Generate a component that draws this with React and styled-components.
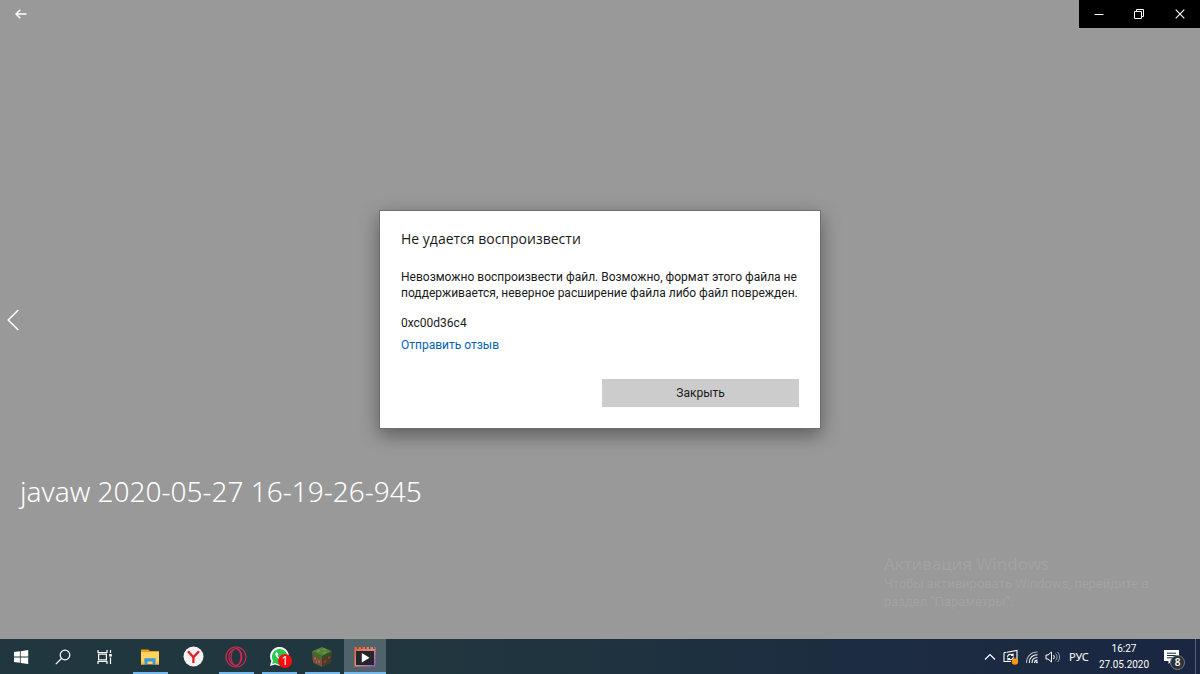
import React from "react";
import styled, { createGlobalStyle } from "styled-components";

const GlobalStyle = createGlobalStyle`
  *, *::before, *::after { box-sizing: border-box; }
  body { margin: 0; background: #999999; }
  button { border: 0; padding: 0; background: none; color: inherit; font: inherit; cursor: pointer; }
  h1, h2, p { margin: 0; font-weight: 400; }
  svg { display: block; }
`;

const Desktop = styled.div`
  display: flex;
  flex-direction: column;
  min-height: 100vh;
  font-family: "Noto Sans", "Open Sans", sans-serif;
  font-size: 12px;
`;

const Player = styled.main`
  position: relative;
  flex: 1;
  display: flex;
  flex-direction: column;
  justify-content: space-between;
  background: #999999;
  color: #ffffff;
`;

const TitleBar = styled.header`
  display: flex;
  justify-content: space-between;
  height: 28px;
`;

const BackButton = styled.button`
  display: grid;
  place-items: center;
  width: 42px;
  height: 28px;
`;

const WindowControls = styled.div`
  display: flex;
  background: #000000;
`;

const ControlButton = styled.button`
  display: grid;
  place-items: center;
  width: 40px;
  &:last-child { width: 41px; }
`;

const PreviousButton = styled.button`
  position: absolute;
  left: 0;
  top: 50%;
  transform: translateY(-50%);
  display: grid;
  place-items: center;
  width: 26px;
  height: 48px;
`;

const PlayerFooter = styled.footer`
  display: flex;
  flex-direction: column;
  gap: 42px;
  padding: 0 36px 28px 20px;
`;

const MediaTitle = styled.h1`
  font-size: 28px;
  font-weight: 300;
  line-height: 40px;
`;

const Activation = styled.aside`
  align-self: flex-end;
  width: 280px;
  color: #a2a2a2;
`;

const ActivationTitle = styled.h2`
  font-size: 17px;
  line-height: 22px;
`;

const ActivationText = styled.p`
  font-family: "Roboto", sans-serif;
  font-size: 13px;
  line-height: 18px;
`;

const DialogLayer = styled.div`
  position: absolute;
  inset: 0;
  display: grid;
  place-items: center;
  pointer-events: none;
`;

const Dialog = styled.section`
  pointer-events: auto;
  width: 442px;
  padding: 18px 21px 21px;
  border: 1px solid #6f6f6f;
  background: #ffffff;
  color: #1a1a1a;
  font-family: "Roboto", sans-serif;
  box-shadow: 0 6px 18px rgba(0, 0, 0, 0.4);
`;

const DialogTitle = styled.h2`
  font-family: "Open Sans", sans-serif;
  font-size: 14px;
  line-height: 20px;
`;

const DialogText = styled.p`
  margin-top: 20px;
  line-height: 16px;
`;

const ErrorCode = styled.p`
  margin-top: 14px;
  line-height: 16px;
`;

const FeedbackLink = styled.a`
  display: block;
  width: fit-content;
  margin-top: 6px;
  color: #0063b1;
  line-height: 16px;
  text-decoration: none;
`;

const DialogActions = styled.div`
  display: flex;
  justify-content: flex-end;
  margin-top: 26px;
`;

const CloseButton = styled.button`
  width: 197px;
  height: 28px;
  background: #cccccc;
`;

const Taskbar = styled.nav`
  display: flex;
  justify-content: space-between;
  height: 35px;
  background: linear-gradient(90deg, #21373f 0%, #21373f 34%, #1d2f40 62%, #1a2642 100%);
  color: #ffffff;
`;

const TaskGroup = styled.div`
  display: flex;
  gap: 1px;
`;

const SystemButton = styled.button`
  display: grid;
  place-items: center;
  width: 41px;
`;

const AppButton = styled.button`
  position: relative;
  display: grid;
  place-items: center;
  width: 42px;
  background: ${(p) => (p.$active ? "#50626a" : "none")};
  &::after {
    content: "";
    display: ${(p) => (p.$running ? "block" : "none")};
    position: absolute;
    bottom: 0;
    left: ${(p) => (p.$active ? "0" : "4px")};
    right: ${(p) => (p.$active ? "0" : "3px")};
    height: 2px;
    background: #76b9ed;
  }
`;

const AppList = styled(TaskGroup)`
  padding-left: 3px;
`;

const Tray = styled.div`
  display: flex;
  align-items: center;
`;

const TrayButton = styled.button`
  display: grid;
  place-items: center;
  width: ${(p) => p.$width || 21}px;
  height: 35px;
`;

const Language = styled(TrayButton)`
  font-size: 11px;
`;

const Clock = styled.button`
  width: 58px;
  font-family: "Roboto", sans-serif;
  font-size: 10px;
  line-height: 16px;
  text-align: center;
`;

const Time = styled.time`
  display: block;
`;

const Notifications = styled(TrayButton)`
  position: relative;
  padding-right: 4px;
`;

const Count = styled.span`
  position: absolute;
  right: 10px;
  bottom: 4px;
  width: 15px;
  height: 15px;
  border: 1px solid #747b87;
  border-radius: 50%;
  background: #2d3137;
  font-size: 10px;
  font-weight: 600;
  line-height: 13px;
  text-align: center;
`;

const UnreadBadge = styled.span`
  position: absolute;
  left: 20px;
  top: 15px;
  width: 14px;
  height: 14px;
  border-radius: 50%;
  background: #f80d0d;
  font-size: 12px;
  line-height: 14px;
  text-align: center;
`;

const ShowDesktop = styled.button`
  width: 5px;
  height: 35px;
  border-left: 1px solid #55607a;
`;

const Line = ({ width, height, stroke = 1, children, color = "#fff" }) => (
  <svg width={width} height={height} viewBox={`0 0 ${width} ${height}`} fill="none" stroke={color} strokeWidth={stroke} aria-hidden="true">
    {children}
  </svg>
);

const StartIcon = () => (
  <svg width="16" height="16" viewBox="0 0 16 16" fill="#fff" aria-hidden="true">
    <path d="M1 3.1 6.9 2.3V7.6H1zM7.7 2.2 15.2 1v6.6H7.7zM1 8.4h5.9v5.3L1 12.9zM7.7 8.4h7.5V15L7.7 13.9z" />
  </svg>
);

const ExplorerIcon = () => (
  <svg width="20" height="18" viewBox="0 0 20 18" aria-hidden="true">
    <path d="M1 1.5h7.5l1.2 1.6H19V8H1z" fill="#e9a01b" />
    <path d="M1 4h18v12.4H1z" fill="#ffd35c" />
    <path d="M4.4 16.6V10.2h11.2v6.4h-3v-3.2H7.4v3.2z" fill="#3a97dd" />
    <path d="M1 14.2h3.4v2.2H1zM15.6 14.2H19v2.2h-3.4z" fill="#f5bd43" />
  </svg>
);

const YandexIcon = () => (
  <svg width="21" height="21" viewBox="0 0 21 21" aria-hidden="true">
    <circle cx="10.5" cy="10.5" r="10" fill="#f3f3f3" />
    <path d="M5 5.3 10.4 11.2 16 5.3M10.4 10.5V17" fill="none" stroke="#e21c22" strokeWidth="2.3" />
  </svg>
);

const OperaIcon = () => (
  <Line width={22} height={22} stroke={1.2} color="#d02850">
    <circle cx="11" cy="11" r="10" />
    <ellipse cx="11" cy="11" rx="5" ry="8.6" />
    <path d="M11 2.4c7.8 1.3 7.8 15.9 0 17.2M8.5 3.2c-6 2.7-6 12.9 0 15.6" />
  </Line>
);

const WhatsAppIcon = () => (
  <svg width="21" height="21" viewBox="0 0 21 21" aria-hidden="true">
    <path d="M1 20 2.3 15A9.4 9.4 0 1 1 6 18.6z" fill="#fff" />
    <path d="M3.1 18 4 14.7a7.8 7.8 0 1 1 2.2 2.4z" fill="#28c94c" />
    <path d="M7.6 5.6 6.3 7c-.6 3 4.2 7.7 7.2 7.5l1.6-1.6-2.4-1.5-1.2 1.1c-1.3-.5-2.5-1.7-3-3L9.4 8.3z" fill="#fff" />
  </svg>
);

const MinecraftIcon = () => (
  <svg width="22" height="22" viewBox="0 0 22 22" aria-hidden="true">
    <path d="m1 5.3 10-4.3 10 4.3-10 4.9z" fill="#55803c" />
    <path d="m1 5.3 10 4.9V21L2 16.5z" fill="#79503a" />
    <path d="m21 5.3-10 4.9V21l9-4.5z" fill="#543626" />
    <path d="m1 5.3 10 4.9v2l-2-.6-1 .6-2-1.6-2 0L1.2 7z" fill="#3f6d2b" />
    <path d="m21 5.3-10 4.9v2l2-1 2 .2 2-2 1 .3 2.8-1.7z" fill="#2c5322" />
    <path d="m5 5 3-1.5L10 4.5 7 6zM11 3l3-.5 2 1.5-3 .6zM11 7l3-1.5 2 .7L13 8z" fill="#6d9848" />
    <path d="m3 11 2 1v2l-2-1zM7 14l2 1v2l-2-1zM5 15l1 .5v2L5 17z" fill="#9a6f4e" />
    <path d="m13 15 2-1v2l-2 1zM17 11l2-1v2l-2 1z" fill="#765039" />
  </svg>
);

const MoviesIcon = () => (
  <svg width="22" height="20" viewBox="0 0 22 20" aria-hidden="true">
    <defs>
      <linearGradient id="film" x1="0" y1="0" x2="1" y2="1">
        <stop offset="0" stopColor="#ee6038" />
        <stop offset=".5" stopColor="#e08a78" />
        <stop offset="1" stopColor="#9250d2" />
      </linearGradient>
    </defs>
    <path d="M.5 0h21v19.5H.5z" fill="url(#film)" />
    <path d="M2 4h18v14H2z" fill="#25252c" />
    <path d="M3 0h1.5v2H3zM7 0h1.500v2H7zM11 0h1.500v2H11zM15 0h1.500v2H15zM19 0h1.500v2H19z" fill="#50505c" />
    <path d="M7.8 6v9.5l7.7-4.8z" fill="#fff" />
  </svg>
);

const apps = [
  { name: "Проводник", icon: <ExplorerIcon />, running: true },
  { name: "Яндекс", icon: <YandexIcon /> },
  { name: "Opera", icon: <OperaIcon />, running: true },
  { name: "WhatsApp", icon: <WhatsAppIcon />, running: true, unread: 1 },
  { name: "Minecraft", icon: <MinecraftIcon />, running: true },
  { name: "Кино и ТВ", icon: <MoviesIcon />, running: true, active: true },
];

export default function App() {
  return (
    <Desktop>
      <GlobalStyle />
      <Player>
        <TitleBar>
          <BackButton aria-label="Назад">
            <Line width={12} height={10} stroke={1.4}><path d="M11.5 5H1M5.3.7 1 5l4.3 4.3" /></Line>
          </BackButton>
          <WindowControls>
            <ControlButton aria-label="Свернуть"><Line width={10} height={10}><path d="M.5 5.5h9" /></Line></ControlButton>
            <ControlButton aria-label="Свернуть в окно">
              <Line width={10} height={10}><path d="M.5 2.5h7v7h-7zM2.5 2.5v-2h7v7h-2" /></Line>
            </ControlButton>
            <ControlButton aria-label="Закрыть окно"><Line width={10} height={10} stroke={1.1}><path d="m.7.7 8.6 8.6m0-8.6L.7 9.3" /></Line></ControlButton>
          </WindowControls>
        </TitleBar>

        <PreviousButton aria-label="Предыдущий">
          <Line width={12} height={22} stroke={1.5}><path d="M11.3 1 1.2 11l10.1 10" /></Line>
        </PreviousButton>

        <PlayerFooter>
          <MediaTitle>javaw 2020-05-27 16-19-26-945</MediaTitle>
          <Activation>
            <ActivationTitle>Активация Windows</ActivationTitle>
            <ActivationText>Чтобы активировать Windows, перейдите в раздел "Параметры".</ActivationText>
          </Activation>
        </PlayerFooter>

        <DialogLayer>
          <Dialog role="dialog" aria-labelledby="dialog-title">
            <DialogTitle id="dialog-title">Не удается воспроизвести</DialogTitle>
            <DialogText>
              Невозможно воспроизвести файл. Возможно, формат этого файла не<br />
              поддерживается, неверное расширение файла либо файл поврежден.
            </DialogText>
            <ErrorCode>0xc00d36c4</ErrorCode>
            <FeedbackLink href="#feedback">Отправить отзыв</FeedbackLink>
            <DialogActions><CloseButton>Закрыть</CloseButton></DialogActions>
          </Dialog>
        </DialogLayer>
      </Player>

      <Taskbar aria-label="Панель задач">
        <TaskGroup>
          <SystemButton aria-label="Пуск"><StartIcon /></SystemButton>
          <SystemButton aria-label="Поиск">
            <Line width={16} height={16} stroke={1.2}><circle cx="10" cy="6" r="4.8" /><path d="m6.5 9.5-5.7 5.7" /></Line>
          </SystemButton>
          <SystemButton aria-label="Представление задач">
            <Line width={16} height={16} stroke={1.2}>
              <path d="M1 1v2.5h9V1M1 15v-2.5h9V15M1.6 5.2h7.8v5.6H1.6zM13.5 1v3M13.5 8.5V15" />
              <path d="M12.2 5h2.6v2.6h-2.6z" fill="#fff" stroke="none" />
            </Line>
          </SystemButton>
          <AppList>
            {apps.map((app) => (
              <AppButton key={app.name} aria-label={app.name} $running={app.running} $active={app.active}>
                {app.icon}
                {app.unread && <UnreadBadge>{app.unread}</UnreadBadge>}
              </AppButton>
            ))}
          </AppList>
        </TaskGroup>

        <Tray>
          <TrayButton aria-label="Скрытые значки"><Line width={12} height={8} stroke={1.2}><path d="m1 6.5 5-5 5 5" /></Line></TrayButton>
          <TrayButton aria-label="Обновление">
            <Line width={16} height={16} stroke={1.1}>
              <path d="M4 3.2 14 1.5v12M1 3.5h2.5M1 3.5v9h7M4.5 8c.2-3 4-3.4 5.6-1.5V4.5m0 2H8M10.4 8c-.2 2.7-3.9 3.4-5.5 1.500v2m0-2h2" />
              <circle cx="12" cy="12.5" r="3.2" fill="#ff9811" stroke="none" />
            </Line>
          </TrayButton>
          <TrayButton aria-label="Сеть">
            <Line width={14} height={14} stroke={1.1}>
              <path d="M1.5 13C1.5 6.5 6 2 12.5 2" opacity=".65" />
              <path d="M4.2 13c0-5 3.3-8.3 8.3-8.3M7 13c0-3.4 2.1-5.5 5.5-5.5" />
              <path d="M9.6 13c0-1.8 1.1-2.9 2.9-2.9" />
              <circle cx="11.8" cy="12.3" r="1" fill="#fff" stroke="none" />
            </Line>
          </TrayButton>
          <TrayButton aria-label="Громкость">
            <Line width={16} height={14}>
              <path d="M1 5v4h2l3.500 3V2L3 5zM8.500 5c1 1.200 1 2.800 0 4" />
              <path d="M10.5 3.5c2 2 2 5 0 7M12.5 2c2.7 2.7 2.7 7.3 0 10" opacity=".55" />
            </Line>
          </TrayButton>
          <Language $width={32}>РУС</Language>
          <Clock><Time>16:27</Time><Time dateTime="2020-05-27">27.05.2020</Time></Clock>
          <Notifications $width={42} aria-label="Уведомления">
            <svg width="16" height="16" viewBox="0 0 16 16" aria-hidden="true">
              <path d="M0 1h15v11H7.5L4.5 15v-3H0z" fill="#fff" />
              <path d="M3 4.2h9M3 6.5h9M3 8.8h6" stroke="#1b2a42" strokeWidth="1" />
            </svg>
            <Count>8</Count>
          </Notifications>
          <ShowDesktop aria-label="Свернуть все окна" />
        </Tray>
      </Taskbar>
    </Desktop>
  );
}
